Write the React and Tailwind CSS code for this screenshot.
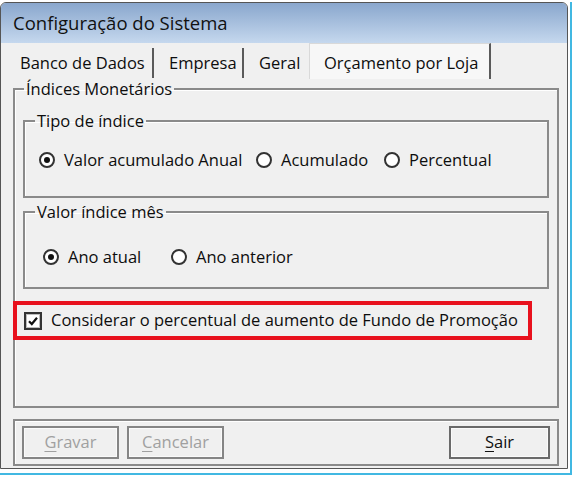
const Radio = ({ checked }) => (
  <span className="w-[16px] h-[16px] rounded-full border-2 border-[#333] bg-white flex items-center justify-center shrink-0">
    {checked && <span className="w-[6px] h-[6px] rounded-full bg-[#111]" />}
  </span>
);

const Option = ({ label, checked, w }) => (
  <div className={`flex items-center gap-[9px] ${w}`}>
    <Radio checked={checked} />
    <span className="whitespace-nowrap">{label}</span>
  </div>
);

const groupBox = 'border-2 border-[#8a8a8a] shadow-[inset_1px_1px_0_#fff]';

export default function App() {
  return (
    <div className="w-[573px] h-[480px] bg-white pt-[2px] font-['Open_Sans',sans-serif] text-[16.5px] text-[#0d0d0d] overflow-hidden">
      <div className="w-[572px] h-[473px] border-r-2 border-b-2 border-[#41b8e2]">
        <div className="w-[568px] h-[467px] border border-[#555] rounded-t-[6px] overflow-hidden bg-[#f0f0f0] flex flex-col">
          {/* title bar */}
          <div className="h-[40px] shrink-0 bg-gradient-to-b from-[#8aa7cd] to-[#c5d8ee] pl-[12px] flex items-center text-[18.5px] text-[#111]">
            Configuração do Sistema
          </div>

          <div className="flex-1 flex flex-col pl-[12px]">
            {/* tabs */}
            <div className="h-[36px] shrink-0 flex items-end ml-[-1px]">
              <div className="w-[142px] h-[30px] mb-[1px] pl-[8px] pt-[1px] flex items-center border-r-2 border-[#5a5a5a]">Banco de Dados</div>
              <div className="w-[90px] h-[30px] mb-[1px] pl-[15px] pt-[1px] flex items-center border-r-2 border-[#5a5a5a]">Empresa</div>
              <div className="w-[65px] h-[30px] mb-[1px] pl-[15px] pt-[1px] flex items-center">Geral</div>
              <div className="w-[182px] h-[36px] pl-[14px] pt-[3px] flex items-center bg-[#f7f7f7] border-t border-l border-[#d9d9d9] border-r-2 border-r-[#5a5a5a]">
                Orçamento por Loja
              </div>
            </div>

            {/* Índices Monetários */}
            <fieldset className={`w-[546px] h-[329px] ${groupBox}`}>
              <legend className="ml-[9px] px-[2px] leading-[20px]">Índices Monetários</legend>

              <fieldset className={`ml-[8px] mt-[12px] w-[526px] ${groupBox}`}>
                <legend className="ml-[10px] px-[2px] leading-[20px]">Tipo de índice</legend>
                <div className="h-[20px] mt-[19px] mb-[26px] pl-[14px] flex items-center">
                  <Option label="Valor acumulado Anual" checked w="w-[217px]" />
                  <Option label="Acumulado" w="w-[128px]" />
                  <Option label="Percentual" w="w-[140px]" />
                </div>
              </fieldset>

              <fieldset className={`ml-[8px] mt-[4px] w-[526px] ${groupBox}`}>
                <legend className="ml-[10px] px-[2px] leading-[20px]">Valor índice mês</legend>
                <div className="h-[20px] mt-[25px] mb-[20px] pl-[18px] flex items-center">
                  <Option label="Ano atual" checked w="w-[128px]" />
                  <Option label="Ano anterior" w="w-[150px]" />
                </div>
              </fieldset>

              <div className="mt-[12px] ml-[-2px] w-[519px] h-[39px] border-4 border-[#e8111d] flex items-center pl-[7px] gap-[9px]">
                <span className="w-[18px] h-[18px] border-2 border-[#333] bg-white flex items-center justify-center shadow-[inset_0_0_0_1px_#bdbdbd]">
                  <svg viewBox="0 0 12 12" className="w-[12px] h-[12px]">
                    <path d="M2 6.2 L4.8 9 L10 2.8" fill="none" stroke="#111" strokeWidth="2.2" />
                  </svg>
                </span>
                <span className="whitespace-nowrap">Considerar o percentual de aumento de Fundo de Promoção</span>
              </div>
            </fieldset>

            {/* buttons */}
            <div className={`mt-[11px] w-[546px] h-[47px] ${groupBox} flex items-start pt-[5px] px-[7px] gap-[8px]`}>
              <button className="w-[97px] h-[33px] border-2 border-[#858585] bg-[#f0f0f0] text-[#a0a0a0] shadow-[inset_0_0_0_1px_#fafafa]">
                <span className="underline underline-offset-[3px]">G</span>ravar
              </button>
              <button className="w-[97px] h-[33px] border-2 border-[#858585] bg-[#f0f0f0] text-[#a0a0a0] shadow-[inset_0_0_0_1px_#fafafa]">
                <span className="underline underline-offset-[3px]">C</span>ancelar
              </button>
              <button className="ml-auto w-[101px] h-[33px] border-2 border-[#6a6a6a] bg-[#f0f0f0] text-[#111] shadow-[inset_0_0_0_1px_#fafafa]">
                <span className="underline underline-offset-[3px]">S</span>air
              </button>
            </div>
          </div>
        </div>
      </div>
    </div>
  );
}
